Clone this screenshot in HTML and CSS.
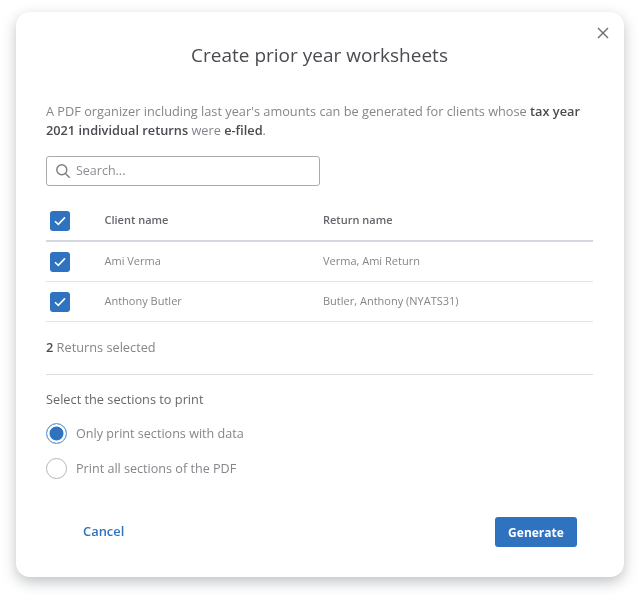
FILE: index.html
```html
<!DOCTYPE html>
<html lang="en">
<head>
    <meta charset="UTF-8">
    <meta name="viewport" content="width=device-width, initial-scale=1.0">
    <title>Create prior year worksheets</title>
    <link rel="stylesheet" href="styles.css">
</head>
<body>
    <div class="modal">
        <button class="close" aria-label="Close">
            <svg width="12" height="12" viewBox="0 0 12 12"><path d="M1 1l10 10M11 1L1 11" stroke="#6b6c72" stroke-width="1.4" fill="none"/></svg>
        </button>
        <h1>Create prior year worksheets</h1>
        <p class="intro">A PDF organizer including last year's amounts can be generated for clients whose <b>tax year 2021 individual returns</b> were <b>e-filed</b>.</p>

        <div class="search">
            <svg width="16" height="16" viewBox="0 0 16 16"><circle cx="6.8" cy="6.8" r="5" stroke="#7c7d83" stroke-width="1.4" fill="none"/><path d="M10.5 10.5l4.2 4.2" stroke="#7c7d83" stroke-width="1.4" fill="none"/></svg>
            <span>Search...</span>
        </div>

        <div class="row head">
            <span class="check"><svg width="12" height="10" viewBox="0 0 12 10"><path d="M1 5.2l3.3 3.2L11 1.4" stroke="#fff" stroke-width="1.6" fill="none"/></svg></span>
            <span class="cell name">Client name</span>
            <span class="cell">Return name</span>
        </div>
        <div class="row">
            <span class="check"><svg width="12" height="10" viewBox="0 0 12 10"><path d="M1 5.2l3.3 3.2L11 1.4" stroke="#fff" stroke-width="1.6" fill="none"/></svg></span>
            <span class="cell name">Ami Verma</span>
            <span class="cell">Verma, Ami Return</span>
        </div>
        <div class="row">
            <span class="check"><svg width="12" height="10" viewBox="0 0 12 10"><path d="M1 5.2l3.3 3.2L11 1.4" stroke="#fff" stroke-width="1.6" fill="none"/></svg></span>
            <span class="cell name">Anthony Butler</span>
            <span class="cell">Butler, Anthony (NYATS31)</span>
        </div>

        <div class="count"><b>2</b> Returns selected</div>

        <div class="sections-title">Select the sections to print</div>
        <div class="radio-group">
            <div class="radio-row">
                <span class="radio on"></span>
                <span>Only print sections with data</span>
            </div>
            <div class="radio-row">
                <span class="radio"></span>
                <span>Print all sections of the PDF</span>
            </div>
        </div>

        <div class="actions">
            <a class="cancel" href="#">Cancel</a>
            <button class="generate">Generate</button>
        </div>
    </div>
</body>
</html>
```

FILE: styles.css
```css
* {
    box-sizing: border-box;
}

body {
    margin: 0;
    height: 598px;
    overflow: hidden;
    padding: 12px 16px 0;
    background-color: #fff;
    font-family: "Open Sans", sans-serif;
    color: #85868b;
}

.modal {
    position: relative;
    width: 608px;
    height: 565px;
    padding: 0 31px 0 30px;
    background-color: #fff;
    border-radius: 14px;
    box-shadow: 0 5px 14px rgba(60, 65, 75, 0.32);
    filter: blur(0.5px);
}

.close {
    position: absolute;
    top: 15px;
    right: 15px;
    padding: 0;
    border: none;
    background: none;
    line-height: 0;
}

h1 {
    margin: 0;
    padding-top: 31px;
    font-size: 19px;
    line-height: 25px;
    font-weight: 400;
    text-align: center;
    color: #4a4b50;
}

.intro {
    margin: 34px 0 0;
    font-size: 12.75px;
    line-height: 19px;
}

b {
    font-weight: 600;
    color: #4a4b50;
}

.search {
    display: flex;
    align-items: center;
    gap: 5px;
    width: 274px;
    height: 30px;
    margin-top: 16px;
    padding: 0 0 1px 8px;
    border: 1px solid #a9aaae;
    border-radius: 3px;
    font-size: 12.5px;
    color: #8d8e93;
}

.row {
    display: flex;
    align-items: center;
    height: 40px;
    border-bottom: 1px solid #e3e4e7;
    font-size: 11px;
}

.row.head {
    height: 41px;
    margin-top: 15px;
    border-bottom: 2px solid #d5d8e0;
    color: #66676c;
    font-weight: 600;
}

.check {
    display: flex;
    align-items: center;
    justify-content: center;
    width: 20px;
    height: 20px;
    margin-left: 4px;
    border-radius: 3px;
    background-color: #2f72bf;
}

.cell {
    margin-bottom: 2px;
}

.cell.name {
    width: 218.5px;
    margin-left: 34.5px;
}

.count {
    height: 53px;
    padding-top: 17px;
    border-bottom: 1px solid #dcdcde;
    font-size: 12.75px;
    line-height: 17px;
}

.sections-title {
    margin-top: 15px;
    font-size: 12.75px;
    line-height: 18px;
    color: #66676c;
}

.radio-group {
    display: flex;
    flex-direction: column;
    gap: 14px;
    margin-top: 15px;
}

.radio-row {
    display: flex;
    align-items: center;
    gap: 9px;
    height: 21px;
    font-size: 12.6px;
}

.radio {
    width: 21px;
    height: 21px;
    border: 1px solid #b4b5b9;
    border-radius: 50%;
}

.radio.on {
    border: 1.5px solid #6ea4e2;
    background-color: #2f72bf;
    box-shadow: inset 0 0 0 2.5px #fff;
}

.actions {
    display: flex;
    align-items: center;
    justify-content: space-between;
    margin-top: 38px;
}

.cancel {
    margin: 0 0 2px 37px;
    font-size: 12.9px;
    font-weight: 600;
    text-decoration: none;
    color: #2f72bf;
}

.generate {
    width: 82px;
    height: 30px;
    margin-right: 16px;
    border: none;
    border-radius: 3px;
    background-color: #2f72bf;
    font-family: inherit;
    font-size: 12px;
    font-weight: 700;
    color: #fff;
}
```
